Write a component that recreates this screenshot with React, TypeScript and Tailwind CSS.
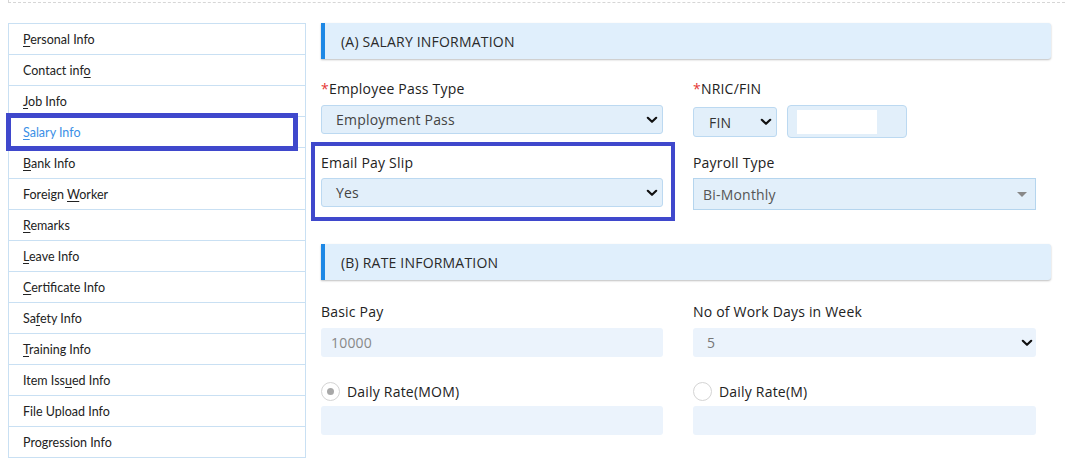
import React from "react";

const U = ({ children }: { children: React.ReactNode }) => <span className="underline underline-offset-2">{children}</span>;

const navItems: React.ReactNode[] = [
  <><U>P</U>ersonal Info</>,
  <>Contact inf<U>o</U></>,
  <><U>J</U>ob Info</>,
  <><U>S</U>alary Info</>,
  <><U>B</U>ank Info</>,
  <>Foreign <U>W</U>orker</>,
  <><U>R</U>emarks</>,
  <><U>L</U>eave Info</>,
  <><U>C</U>ertificate Info</>,
  <>Sa<U>f</U>ety Info</>,
  <><U>T</U>raining Info</>,
  <>Item Iss<U>u</U>ed Info</>,
  <>File Upload Info</>,
  <>Progression Info</>,
];

const Chevron = () => (
  <svg width="12" height="8" viewBox="0 0 12 8" className="shrink-0">
    <path d="M1.8 1.8 L6 5.8 L10.2 1.8" fill="none" stroke="#111" strokeWidth="2.2" strokeLinecap="round" strokeLinejoin="round" />
  </svg>
);

const SectionHeader = ({ title }: { title: string }) => (
  <div className="flex h-[36px] items-center rounded-r-[3px] border-l-[4px] border-[#1e88e5] bg-[#e0effc] pl-[16px] text-[14px] tracking-[0.2px] text-[#2a2a2a] shadow-[0_1px_2px_rgba(0,0,0,0.25)]">
    {title}
  </div>
);

const Label = ({ children, req }: { children: React.ReactNode; req?: boolean }) => (
  <div className="h-[20px] text-[14px] leading-[20px] tracking-[0.2px] text-[#222]">
    {req && <span className="text-[#e53935]">*</span>}
    {children}
  </div>
);

export default function App() {
  const font = { fontFamily: '"Open Sans", sans-serif' };
  return (
    <div className="relative h-[461px] w-[1065px] overflow-hidden bg-white" style={font}>
      <div className="ml-[8px] h-[3px] border-b border-l border-dashed border-[#d6d6d6]" />
      <div className="mt-[20px] flex">
        {/* Sidebar */}
        <div className="ml-[8px] w-[298px] shrink-0 border-x border-t border-[#c9e0f3] font-['Lato',sans-serif]">
          {navItems.map((n, i) => (
            <div
              key={i}
              className={`flex h-[31px] items-center border-b border-[#c9e0f3] pl-[14px] pt-[2px] text-[12.5px] ${i === 3 ? "text-[#3b8fe6]" : "text-[#222]"}`}
            >
              <span>{n}</span>
            </div>
          ))}
        </div>

        {/* Main */}
        <div className="ml-[15px] w-[730px] tracking-[0.2px]">
          <SectionHeader title="(A) SALARY INFORMATION" />
          <div className="mt-[20px] grid grid-cols-[342px_343px] gap-x-[30px]">
            <div>
              <Label req>Employee Pass Type</Label>
              <div className="mt-[6px] flex h-[29px] items-center justify-between rounded-[3px] border border-[#bcd9f1] bg-[#e2effa] pl-[14px] pr-[4px] text-[14px] text-[#444]">
                <span>Employment Pass</span>
                <Chevron />
              </div>
            </div>
            <div>
              <Label req>NRIC/FIN</Label>
              <div className="flex gap-[10px]">
                <div className="mt-[8px] flex h-[30px] w-[84px] items-center justify-between rounded-[3px] border border-[#bcd9f1] bg-[#e2effa] pl-[15px] pr-[4px] text-[14px] text-[#333]">
                  <span>FIN</span>
                  <Chevron />
                </div>
                <div className="mt-[6px] flex h-[33px] w-[120px] items-center rounded-[4px] border border-[#bcd9f1] bg-[#e2effa] pl-[9px]">
                  <div className="h-[24px] w-[80px] bg-white" />
                </div>
              </div>
            </div>
            <div className="mt-[15px]">
              <Label>Email Pay Slip</Label>
              <div className="mt-[5px] flex h-[29px] items-center justify-between rounded-[3px] border border-[#bcd9f1] bg-[#e2effa] pl-[14px] pr-[4px] text-[14px] text-[#444]">
                <span>Yes</span>
                <Chevron />
              </div>
            </div>
            <div className="mt-[15px]">
              <Label>Payroll Type</Label>
              <div className="mt-[5px] flex h-[32px] items-center justify-between border border-[#b5d5ee] bg-[#e2effa] pl-[9px] pr-[8px] text-[14px] text-[#555]">
                <span>Bi-Monthly</span>
                <svg width="10" height="5" viewBox="0 0 10 5"><path d="M0 0 H10 L5 5 Z" fill="#888" /></svg>
              </div>
            </div>
          </div>

          <div className="mt-[34px]">
            <SectionHeader title="(B) RATE INFORMATION" />
          </div>
          <div className="mt-[22px] grid grid-cols-[342px_343px] gap-x-[30px]">
            <div>
              <Label>Basic Pay</Label>
              <div className="mt-[6px] flex h-[29px] items-center rounded-[3px] bg-[#ebf3fc] pl-[10px] text-[14px] text-[#888]">10000</div>
            </div>
            <div>
              <Label>No of Work Days in Week</Label>
              <div className="mt-[6px] flex h-[29px] items-center justify-between rounded-[3px] bg-[#ebf3fc] pl-[14px] pr-[3px] text-[14px] text-[#777]">
                <span>5</span>
                <Chevron />
              </div>
            </div>
            <div className="mt-[24px]">
              <div className="flex h-[20px] items-center gap-[7px]">
                <div className="flex h-[19px] w-[19px] items-center justify-center rounded-full border border-[#d4d4d4] bg-white">
                  <div className="h-[7px] w-[7px] rounded-full bg-[#a8a8a8]" />
                </div>
                <span className="text-[14px] text-[#222]">Daily Rate(MOM)</span>
              </div>
              <div className="mt-[5px] h-[29px] rounded-[3px] bg-[#ebf3fc]" />
            </div>
            <div className="mt-[24px]">
              <div className="flex h-[20px] items-center gap-[7px]">
                <div className="h-[19px] w-[19px] rounded-full border border-[#d4d4d4] bg-white" />
                <span className="text-[14px] text-[#222]">Daily Rate(M)</span>
              </div>
              <div className="mt-[5px] h-[29px] rounded-[3px] bg-[#ebf3fc]" />
            </div>
          </div>
        </div>
      </div>

      {/* Annotation boxes */}
      <div className="pointer-events-none absolute left-[6px] top-[113px] h-[38px] w-[292px] border-[5px] border-[#3f48cc]" />
      <div className="pointer-events-none absolute left-[311px] top-[142px] h-[79px] w-[364px] border-[4px] border-[#3f48cc]" />
    </div>
  );
}
